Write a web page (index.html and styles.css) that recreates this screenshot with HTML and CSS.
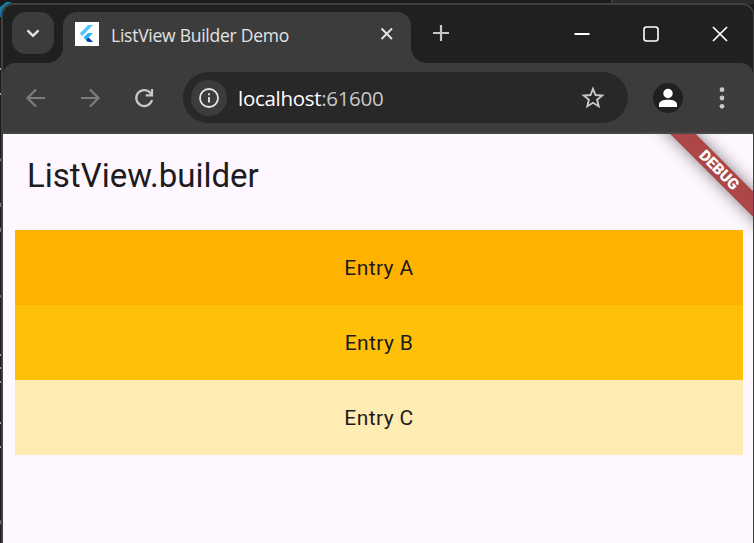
FILE: index.html
```html
<!DOCTYPE html>
<html lang="en">
<head>
<meta charset="utf-8">
<title>ListView Builder Demo</title>
<link rel="stylesheet" href="styles.css">
</head>
<body>
<svg class="backdrop" width="754" height="543" viewBox="0 0 754 543" aria-hidden="true">
  <path d="M0 17V7L6 2h6L3 9v8z" fill="#1579b0"/>
  <path d="M611 4l2-4h141v4z" fill="#2b2b2b"/>
  <path d="M610.500 4.500l2-5" stroke="#555" fill="none"/>
  <path d="M0 69h2M0 94h2M0 355h2M0 368h2M0 382h2M0 423h2M0 447h2" stroke="#a5a5a5" stroke-width="2"/>
  <path d="M0 161l2-3M0 207q0-4 2-4M0 232q0-4 2-4M0 297l2-2M0 524l2-5" stroke="#77767b" stroke-width="2" fill="none"/>
</svg>
<div class="window">
  <div class="tabstrip">
    <button class="tab-search" aria-label="Search tabs"><svg width="14" height="9" viewBox="0 0 14 9"><path d="M1.500 1.300L7 6.800l5.500-5.500" fill="none" stroke="#e3e3e3" stroke-width="2.400"/></svg></button>
    <div class="tab">
      <svg class="favicon" width="24" height="24" viewBox="0 0 24 24"><path fill="#fff" d="M0 0h24v24H0z"/><path d="M13 3h5L7.300 14l-2.500-2.500z" fill="#54c5f8"/><path d="M13 11h5l-4.500 4.500L18 20h-5l-4.500-4.500z" fill="#29b0f6"/><path d="M11 18l2.500-2.500L18 20h-5z" fill="#01479b"/></svg>
      <span class="tab-title">ListView Builder Demo</span>
      <svg class="tab-close" width="14" height="14" viewBox="0 0 14 14"><path d="M1.500 1.500l10.500 10.500M12 1.500L1.500 12" stroke="#e3e3e3" stroke-width="2"/></svg>
    </div>
    <svg class="new-tab" width="16" height="16" viewBox="0 0 16 16"><path d="M8 0v16M0 8h16" stroke="#c7c7c7" stroke-width="2.200"/></svg>
    <div class="controls">
      <svg width="16" height="16" viewBox="0 0 16 16"><path d="M.500 8h15" stroke="#fff" stroke-width="2"/></svg>
      <svg width="16" height="16" viewBox="0 0 16 16"><rect x="1" y="1" width="14" height="14" rx="2.500" fill="none" stroke="#fff" stroke-width="1.600"/></svg>
      <svg width="16" height="16" viewBox="0 0 16 16"><path d="M1 1l14 14M15 1L1 15" stroke="#fff" stroke-width="1.700"/></svg>
    </div>
  </div>
  <div class="toolbar">
    <svg class="nav" width="24" height="24" viewBox="0 0 24 24"><path d="M21 12H4M12 3.500L3.500 12l8.500 8.500" fill="none" stroke="#7c7c7c" stroke-width="2.200"/></svg>
    <svg class="nav" width="24" height="24" viewBox="0 0 24 24"><path d="M3 12h17M12 3.500l8.500 8.500-8.500 8.500" fill="none" stroke="#7c7c7c" stroke-width="2.200"/></svg>
    <svg class="nav" width="24" height="24" viewBox="0 0 24 24"><path d="M20 14a8 8 0 1 1-1.700-7.200L20 9M20 3v6.300h-6.300" fill="none" stroke="#c7c7c7" stroke-width="2.200"/></svg>
    <div class="omnibox">
      <span class="info"><svg width="22" height="22" viewBox="0 0 22 22"><circle cx="11" cy="11" r="9" fill="none" stroke="#e3e3e3" stroke-width="1.800"/><path d="M11 10v5.500M11 6.300v2" stroke="#e3e3e3" stroke-width="1.900"/></svg></span>
      <span class="url">localhost<span class="port">:61600</span></span>
      <svg class="star" width="24" height="24" viewBox="0 0 24 24"><path d="M12 2.800l2.500 6.200 6.700.500-5.100 4.300 1.600 6.500-5.700-3.500-5.700 3.500 1.600-6.500L2.800 9.500l6.700-.500z" fill="none" stroke="#c7c7c7" stroke-width="1.900"/></svg>
    </div>
    <svg class="avatar" width="30" height="30" viewBox="0 0 30 30"><circle cx="15" cy="15" r="15" fill="#1f2120"/><circle cx="15" cy="10.500" r="4.700" fill="#fff"/><path d="M6 24v-2.500c0-3.500 4.500-4.700 9-4.700s9 1.200 9 4.700V24z" fill="#fff"/></svg>
    <svg class="menu" width="6" height="24" viewBox="0 0 6 24"><g fill="#c7c7c7"><circle cx="3" cy="3.700" r="2.400"/><circle cx="3" cy="12" r="2.400"/><circle cx="3" cy="20.300" r="2.400"/></g></svg>
  </div>
  <main class="page">
    <div class="banner">DEBUG</div>
    <h1>ListView.builder</h1>
    <div class="list">
      <div class="entry amber-600">Entry A</div>
      <div class="entry amber-500">Entry B</div>
      <div class="entry amber-100">Entry C</div>
    </div>
  </main>
</div>
</body>
</html>
```
FILE: styles.css
```css
* { box-sizing: border-box; }
body {
  margin: 0;
  height: 543px;
  overflow: hidden;
  background: #1b1b1b;
  font-family: "Open Sans", sans-serif;
}
svg { display: block; flex: none; }
.backdrop { position: absolute; left: 0; top: 0; }
.window {
  position: relative;
  width: 754px;
  height: 543px;
  padding: 5px 1px 0 3px;
  overflow: hidden;
}
.window::before {
  content: "";
  position: absolute;
  left: 1px;
  top: 3px;
  right: 0;
  bottom: -20px;
  border: 2px solid #404040;
  border-right-width: 1px;
  border-radius: 12px 12px 0 0;
  background: #1f2120;
}
.tabstrip {
  position: relative;
  display: flex;
  height: 58px;
  padding: 7px 25px 0 9px;
}
.tab-search {
  width: 42px;
  height: 42px;
  padding: 0;
  border: 0;
  border-radius: 14px;
  background: #3c3c3c;
  display: flex;
  align-items: center;
  justify-content: center;
}
.tab {
  position: relative;
  width: 348px;
  height: 51px;
  margin-left: 9px;
  padding: 0 17px 8px 12px;
  border-radius: 14px 14px 0 0;
  background: #3c3c3c;
  display: flex;
  align-items: center;
}
.tab::before, .tab::after {
  content: "";
  position: absolute;
  bottom: 0;
  width: 15px;
  height: 15px;
}
.tab::before { left: -15px; background: radial-gradient(circle at 0 0, transparent 14.500px, #3c3c3c 15px); }
.tab::after { right: -15px; background: radial-gradient(circle at 100% 0, transparent 14.500px, #3c3c3c 15px); }
.tab-title {
  margin: 2px 0 0 12px;
  color: #e3e3e3;
  font-size: 17.500px;
  line-height: 24px;
  letter-spacing: -0.250px;
  white-space: nowrap;
}
.tab-close { margin-left: auto; }
.new-tab { margin: 13px 0 0 22px; }
.controls { margin: 14px 0 0 auto; display: flex; gap: 53px; }
.toolbar {
  position: relative;
  display: flex;
  align-items: center;
  height: 71px;
  padding: 0 28px 0 21px;
  border-bottom: 2px solid #474747;
  border-radius: 12px 12px 0 0;
  background: #3c3c3c;
}
.nav { margin-right: 30px; }
.omnibox {
  width: 445px;
  height: 51px;
  margin-left: -3px;
  padding: 0 23px 0 8px;
  border-radius: 26px;
  background: #282828;
  display: flex;
  align-items: center;
}
.info {
  width: 36px;
  height: 36px;
  border-radius: 50%;
  background: #3c3c3c;
  display: flex;
  align-items: center;
  justify-content: center;
}
.url {
  margin-left: 11px;
  color: #fff;
  font-size: 20.500px;
  line-height: 28px;
  letter-spacing: -0.300px;
}
.port { color: #c7c7c7; }
.star { margin-left: auto; }
.avatar { margin-left: 25px; }
.menu { margin-left: auto; }
.page {
  position: relative;
  height: 409px;
  padding: 0 10px 0 12px;
  overflow: hidden;
  background: #fef7ff;
  color: #1d1b20;
  font-family: Roboto, sans-serif;
}
h1 {
  margin: 0;
  height: 96px;
  padding: 0 12px 12px;
  font-size: 33px;
  font-weight: 400;
  line-height: 84px;
}
.entry {
  height: 75px;
  padding-top: 1px;
  line-height: 75px;
  text-align: center;
  font-size: 21px;
  letter-spacing: 0.400px;
}
.amber-600 { background: #ffb300; }
.amber-500 { background: #ffc107; }
.amber-100 { background: #ffecb3; }
.banner {
  position: absolute;
  left: 636px;
  top: 27px;
  width: 160px;
  height: 18px;
  transform: rotate(45deg);
  background: #ac4747;
  box-shadow: 0 0 16px rgba(0, 0, 0, 0.5);
  color: #fff;
  font-size: 15.300px;
  font-weight: 900;
  line-height: 18px;
  text-align: center;
}
```
